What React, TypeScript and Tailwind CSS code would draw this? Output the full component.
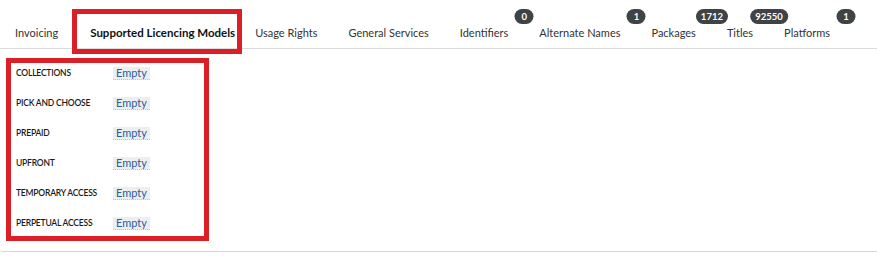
import React from 'react';

type Tab = { label: string; count?: string; active?: boolean };

const tabs: Tab[] = [
  { label: 'Invoicing' },
  { label: 'Supported Licencing Models', active: true },
  { label: 'Usage Rights' },
  { label: 'General Services' },
  { label: 'Identifiers', count: '0' },
  { label: 'Alternate Names', count: '1' },
  { label: 'Packages', count: '1712' },
  { label: 'Titles', count: '92550' },
  { label: 'Platforms', count: '1' },
];

const models = ['COLLECTIONS', 'PICK AND CHOOSE', 'PREPAID', 'UPFRONT', 'TEMPORARY ACCESS', 'PERPETUAL ACCESS'];

export default function App() {
  return (
    <div className="relative w-[877px] h-[261px] bg-white overflow-hidden" style={{ fontFamily: 'Lato, "Open Sans", sans-serif' }}>
      {/* tabs */}
      <div className="flex h-[49px] border-b border-[#dcdcdc]">
        {tabs.map((t) => (
          <div
            key={t.label}
            className={`relative pt-[26px] leading-[14px] whitespace-nowrap ${t.active ? 'pl-[16px] pr-[5px] text-[11.5px] font-bold text-[#111]' : 'pl-[15px] pr-[16px] text-[11px] text-[#333]'}`}
          >
            {t.label}
            {t.count && (
              <span className="absolute top-[9px] left-full -translate-x-1/2 h-[15px] min-w-[19px] px-[5px] rounded-full bg-[#3f4346] text-white text-[9.5px] font-bold leading-[15px] text-center">
                {t.count}
              </span>
            )}
          </div>
        ))}
      </div>

      {/* licencing models */}
      <div className="h-[203px] border-b border-[#d6d6d6] rounded-bl-[3px] pt-[9px] pl-[16px]">
        {models.map((m) => (
          <div key={m} className="flex items-center h-[30px]">
            <div className="w-[97px] text-[8.5px] font-semibold text-[#1a1a1a] tracking-[-0.2px]">{m}</div>
            <span className="h-[13px] px-[3px] bg-[#eceef0] border-b border-dotted border-[#b9c3cf] text-[11px] leading-[12px] text-[#2b5d9b]">Empty</span>
          </div>
        ))}
      </div>

      {/* annotation boxes */}
      <div className="absolute left-[72px] top-[9px] w-[170px] h-[45px] border-[5px] border-[#dc1f26]" />
      <div className="absolute left-[6px] top-[58px] w-[203px] h-[183px] border-[5px] border-[#dc1f26]" />
    </div>
  );
}
